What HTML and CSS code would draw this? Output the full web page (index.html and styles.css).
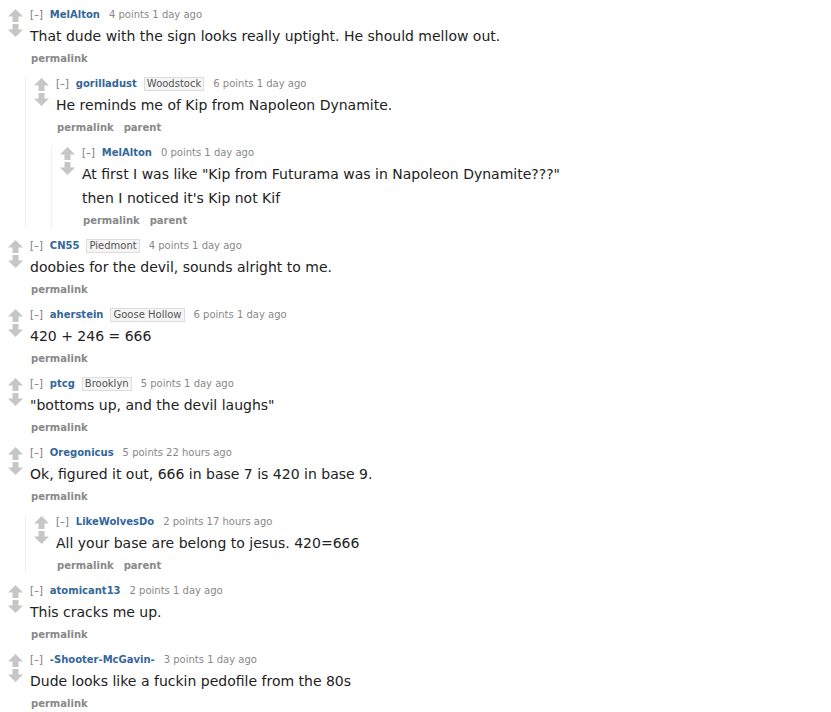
FILE: index.html
```html
<!DOCTYPE html>
<html lang="en">
<head>
    <meta charset="UTF-8">
    <title>comments</title>
    <link rel="stylesheet" href="styles.css">
</head>
<body>
    <svg width="0" height="0" class="defs">
        <defs>
            <symbol id="up" viewBox="0 0 15 13"><path d="M7.5 0 L15 7.5 L10.5 7.5 L10.5 13 L4.5 13 L4.5 7.5 L0 7.5 Z"/></symbol>
            <symbol id="down" viewBox="0 0 15 13"><path d="M7.5 13 L15 5.5 L10.5 5.5 L10.5 0 L4.5 0 L4.5 5.5 L0 5.5 Z"/></symbol>
        </defs>
    </svg>

    <div class="comments">
        <div class="comment">
            <div class="row">
                <div class="midcol"><svg class="arrow"><use href="#up"/></svg><svg class="arrow"><use href="#down"/></svg></div>
                <div class="entry">
                    <p class="tagline"><span class="expand">[–]</span><a class="author">MelAlton</a><span class="score">4 points 1 day ago</span></p>
                    <div class="md"><p>That dude with the sign looks really uptight. He should mellow out.</p></div>
                    <ul class="buttons"><li>permalink</li></ul>
                </div>
            </div>
            <div class="child">
                <div class="comment">
                    <div class="row">
                        <div class="midcol"><svg class="arrow"><use href="#up"/></svg><svg class="arrow"><use href="#down"/></svg></div>
                        <div class="entry">
                            <p class="tagline"><span class="expand">[–]</span><a class="author">gorilladust</a><span class="flair">Woodstock</span><span class="score">6 points 1 day ago</span></p>
                            <div class="md"><p>He reminds me of Kip from Napoleon Dynamite.</p></div>
                            <ul class="buttons"><li>permalink</li><li>parent</li></ul>
                        </div>
                    </div>
                    <div class="child">
                        <div class="comment">
                            <div class="row">
                                <div class="midcol"><svg class="arrow"><use href="#up"/></svg><svg class="arrow"><use href="#down"/></svg></div>
                                <div class="entry">
                                    <p class="tagline"><span class="expand">[–]</span><a class="author">MelAlton</a><span class="score">0 points 1 day ago</span></p>
                                    <div class="md">
                                        <p>At first I was like "Kip from Futurama was in Napoleon Dynamite???"</p>
                                        <p>then I noticed it's Kip not Kif</p>
                                    </div>
                                    <ul class="buttons"><li>permalink</li><li>parent</li></ul>
                                </div>
                            </div>
                        </div>
                    </div>
                </div>
            </div>
        </div>

        <div class="comment">
            <div class="row">
                <div class="midcol"><svg class="arrow"><use href="#up"/></svg><svg class="arrow"><use href="#down"/></svg></div>
                <div class="entry">
                    <p class="tagline"><span class="expand">[–]</span><a class="author">CN55</a><span class="flair">Piedmont</span><span class="score">4 points 1 day ago</span></p>
                    <div class="md"><p>doobies for the devil, sounds alright to me.</p></div>
                    <ul class="buttons"><li>permalink</li></ul>
                </div>
            </div>
        </div>

        <div class="comment">
            <div class="row">
                <div class="midcol"><svg class="arrow"><use href="#up"/></svg><svg class="arrow"><use href="#down"/></svg></div>
                <div class="entry">
                    <p class="tagline"><span class="expand">[–]</span><a class="author">aherstein</a><span class="flair">Goose Hollow</span><span class="score">6 points 1 day ago</span></p>
                    <div class="md"><p>420 + 246 = 666</p></div>
                    <ul class="buttons"><li>permalink</li></ul>
                </div>
            </div>
        </div>

        <div class="comment">
            <div class="row">
                <div class="midcol"><svg class="arrow"><use href="#up"/></svg><svg class="arrow"><use href="#down"/></svg></div>
                <div class="entry">
                    <p class="tagline"><span class="expand">[–]</span><a class="author">ptcg</a><span class="flair">Brooklyn</span><span class="score">5 points 1 day ago</span></p>
                    <div class="md"><p>"bottoms up, and the devil laughs"</p></div>
                    <ul class="buttons"><li>permalink</li></ul>
                </div>
            </div>
        </div>

        <div class="comment">
            <div class="row">
                <div class="midcol"><svg class="arrow"><use href="#up"/></svg><svg class="arrow"><use href="#down"/></svg></div>
                <div class="entry">
                    <p class="tagline"><span class="expand">[–]</span><a class="author">Oregonicus</a><span class="score">5 points 22 hours ago</span></p>
                    <div class="md"><p>Ok, figured it out, 666 in base 7 is 420 in base 9.</p></div>
                    <ul class="buttons"><li>permalink</li></ul>
                </div>
            </div>
            <div class="child">
                <div class="comment">
                    <div class="row">
                        <div class="midcol"><svg class="arrow"><use href="#up"/></svg><svg class="arrow"><use href="#down"/></svg></div>
                        <div class="entry">
                            <p class="tagline"><span class="expand">[–]</span><a class="author">LikeWolvesDo</a><span class="score">2 points 17 hours ago</span></p>
                            <div class="md"><p>All your base are belong to jesus. 420=666</p></div>
                            <ul class="buttons"><li>permalink</li><li>parent</li></ul>
                        </div>
                    </div>
                </div>
            </div>
        </div>

        <div class="comment">
            <div class="row">
                <div class="midcol"><svg class="arrow"><use href="#up"/></svg><svg class="arrow"><use href="#down"/></svg></div>
                <div class="entry">
                    <p class="tagline"><span class="expand">[–]</span><a class="author">atomicant13</a><span class="score">2 points 1 day ago</span></p>
                    <div class="md"><p>This cracks me up.</p></div>
                    <ul class="buttons"><li>permalink</li></ul>
                </div>
            </div>
        </div>

        <div class="comment">
            <div class="row">
                <div class="midcol"><svg class="arrow"><use href="#up"/></svg><svg class="arrow"><use href="#down"/></svg></div>
                <div class="entry">
                    <p class="tagline"><span class="expand">[–]</span><a class="author">-Shooter-McGavin-</a><span class="score">3 points 1 day ago</span></p>
                    <div class="md"><p>Dude looks like a fuckin pedofile from the 80s</p></div>
                    <ul class="buttons"><li>permalink</li></ul>
                </div>
            </div>
        </div>
    </div>
</body>
</html>
```

FILE: styles.css
```css
body {
    margin: 0;
    background: #fff;
    font-family: "DejaVu Sans", Verdana, sans-serif;
    color: #222;
}
.defs {
    position: absolute;
}
.comments {
    padding-top: 8px;
}
.comment + .comment {
    margin-top: 11px;
}
.row {
    display: flex;
    padding-left: 8px;
}
.midcol {
    width: 15px;
    margin-right: 7px;
    padding-top: 1px;
    display: flex;
    flex-direction: column;
    gap: 2px;
}
.arrow {
    width: 15px;
    height: 13px;
    fill: #c6c6c6;
}
.tagline {
    margin: 0;
    font-size: 10px;
    line-height: 14px;
    color: #888;
    display: flex;
    align-items: center;
    gap: 6px;
}
.expand {
    color: #777;
}
.author {
    color: #369;
    font-weight: bold;
    margin-left: 1px;
}
.flair {
    background: #f5f5f5;
    border: 1px solid #ddd;
    color: #545454;
    padding: 0 2px;
    line-height: 12px;
    margin-left: 1px;
}
.score {
    margin-left: 3px;
}
.md {
    margin-top: 4px;
    font-size: 14px;
    line-height: 20px;
}
.md p {
    margin: 0 0 4px;
}
.buttons {
    list-style: none;
    margin: 6px 0 0;
    padding: 0 0 0 1px;
    display: flex;
    gap: 10px;
    font-size: 10px;
    line-height: 14px;
    font-weight: bold;
    color: #888;
}
.child {
    margin: 11px 0 0 25px;
    border-left: 1px solid #eee;
}
```
